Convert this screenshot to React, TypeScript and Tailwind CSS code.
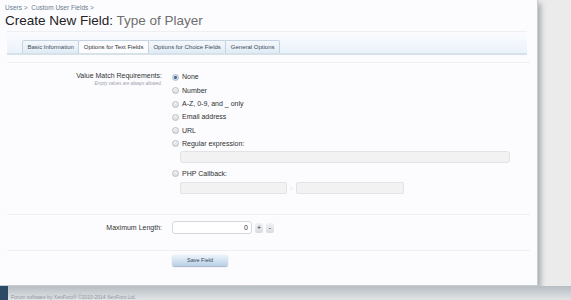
import React from "react";

const font = { fontFamily: '"Liberation Sans", Arial, sans-serif' };

function Radio({ checked }: { checked?: boolean }) {
  return (
    <span
      className={`inline-block w-[7px] h-[7px] rounded-full border border-[#b9bec4] shrink-0 ${
        checked ? "bg-[radial-gradient(circle,#3d6a96_35%,#cfd9e4_45%)]" : "bg-[linear-gradient(#f4f4f4,#dcdcdc)]"
      }`}
    />
  );
}

const tabs = ["Basic Information", "Options for Text Fields", "Options for Choice Fields", "General Options"];
const options = ["None", "Number", "A-Z, 0-9, and _ only", "Email address", "URL"];

export default function App() {
  return (
    <div className="w-[571px] h-[300px] bg-[#ebebeb] overflow-hidden" style={font}>
      <div className="w-[538px] h-[286px] bg-[#fcfcff] border-r border-b border-[#c9ccd0] shadow-[3px_3px_5px_rgba(90,100,110,0.45)] flex flex-col">
        {/* breadcrumb + title */}
        <div className="px-[5px] pt-[3px]">
          <div className="text-[6.5px] text-[#6b7b8c] leading-[9px]">Users &gt; &nbsp;Custom User Fields &gt;</div>
          <h1 className="text-[13.5px] leading-[17px] text-[#222]">
            Create New Field: <span className="text-[#6e6e6e]">Type of Player</span>
          </h1>
        </div>

        {/* tabs */}
        <div className="mt-[2px] ml-[7px] mr-[10px] border-t border-[#eceff3] pt-[8px] bg-[linear-gradient(#fcfcff,#eaf2fa)] border-b-2 border-b-[#d7e1ea]">
          <div className="flex pl-[15px] items-end">
            {tabs.map((t, i) => (
              <div
                key={t}
                className={`h-[13px] px-[4.5px] flex items-center text-[6px] border border-b-0 border-[#c5d3e0] rounded-t-[2px] -mr-px ${
                  i === 1 ? "bg-[#fcfcff] text-[#333]" : "bg-[linear-gradient(#f4f8fc,#e1ebf5)] text-[#3f4a55]"
                }`}
              >
                {t}
              </div>
            ))}
          </div>
        </div>

        {/* value match */}
        <div className="mt-[7px] mx-[7px] border-t border-[#eef0f4] flex pt-[8px] pb-[20px]">
          <div className="w-[157px] text-right pr-[2px]">
            <div className="text-[7px] text-[#333] leading-[9px]">Value Match Requirements:</div>
            <div className="text-[4.5px] italic text-[#9aa1a8] leading-[7px]">Empty values are always allowed.</div>
          </div>
          <div className="pl-[8px] flex-1 text-[7px] text-[#2f2f2f]">
            {options.map((o, i) => (
              <div key={o} className="flex items-center gap-[3px] h-[13.3px]">
                <Radio checked={i === 0} />
                <span>{o}</span>
              </div>
            ))}
            <div className="flex items-center gap-[3px] h-[13px]">
              <Radio />
              <span>Regular expression:</span>
            </div>
            <div className="ml-[8px] mt-[1px] w-[330px] h-[12px] rounded-[3px] border border-[#e1e3e6] bg-[#f2f2f2]" />
            <div className="flex items-center gap-[3px] h-[13px] mt-[4px]">
              <Radio />
              <span>PHP Callback:</span>
            </div>
            <div className="ml-[8px] mt-[2px] flex items-center gap-[3px]">
              <div className="w-[107px] h-[12px] rounded-[2px] border border-[#e1e3e6] bg-[#f2f2f2]" />
              <span className="text-[5px] text-[#9aa1a8]">::</span>
              <div className="w-[108px] h-[12px] rounded-[2px] border border-[#e1e3e6] bg-[#f2f2f2]" />
            </div>
          </div>
        </div>

        {/* maximum length */}
        <div className="mx-[7px] border-t border-[#eef0f4] flex items-center pt-[6px] pb-[16px]">
          <div className="w-[157px] text-right pr-[2px] text-[7px] text-[#333]">Maximum Length:</div>
          <div className="pl-[8px] flex items-center gap-[3px]">
            <div className="w-[80px] h-[13px] rounded-[3px] border border-[#d4d8dc] bg-white flex items-center justify-end pr-[3px] text-[7px] text-[#333]">
              0
            </div>
            <div className="w-[8px] h-[10px] rounded-[2px] bg-[linear-gradient(#f1f3f5,#d7dce1)] text-[7px] leading-[10px] text-center text-[#333]">+</div>
            <div className="w-[8px] h-[10px] rounded-[2px] bg-[linear-gradient(#f1f3f5,#d7dce1)] text-[7px] leading-[9px] text-center text-[#333]">-</div>
          </div>
        </div>

        {/* save */}
        <div className="mx-[7px] border-t border-[#eef0f4] flex pt-[3px]">
          <div className="w-[157px]" />
          <div className="pl-[8px]">
            <div className="w-[56px] h-[12px] rounded-[2px] bg-[linear-gradient(#f2f7fc,#b9d0e6)] shadow-[0_1px_1px_rgba(80,110,140,0.5)] text-[5.5px] text-[#36475a] flex items-center justify-center">
              Save Field
            </div>
          </div>
        </div>
      </div>

      {/* footer */}
      <div className="flex h-[14px]">
        <div className="w-[8px] bg-[#2c4a66]" />
        <div className="flex-1 bg-[linear-gradient(#b6bdc3,#e2e5e7)] pl-[3px] pt-[8px] text-[5px] text-[#8e969d] leading-[6px]">
          Forum software by XenForo® ©2010-2014 XenForo Ltd.
        </div>
      </div>
    </div>
  );
}
